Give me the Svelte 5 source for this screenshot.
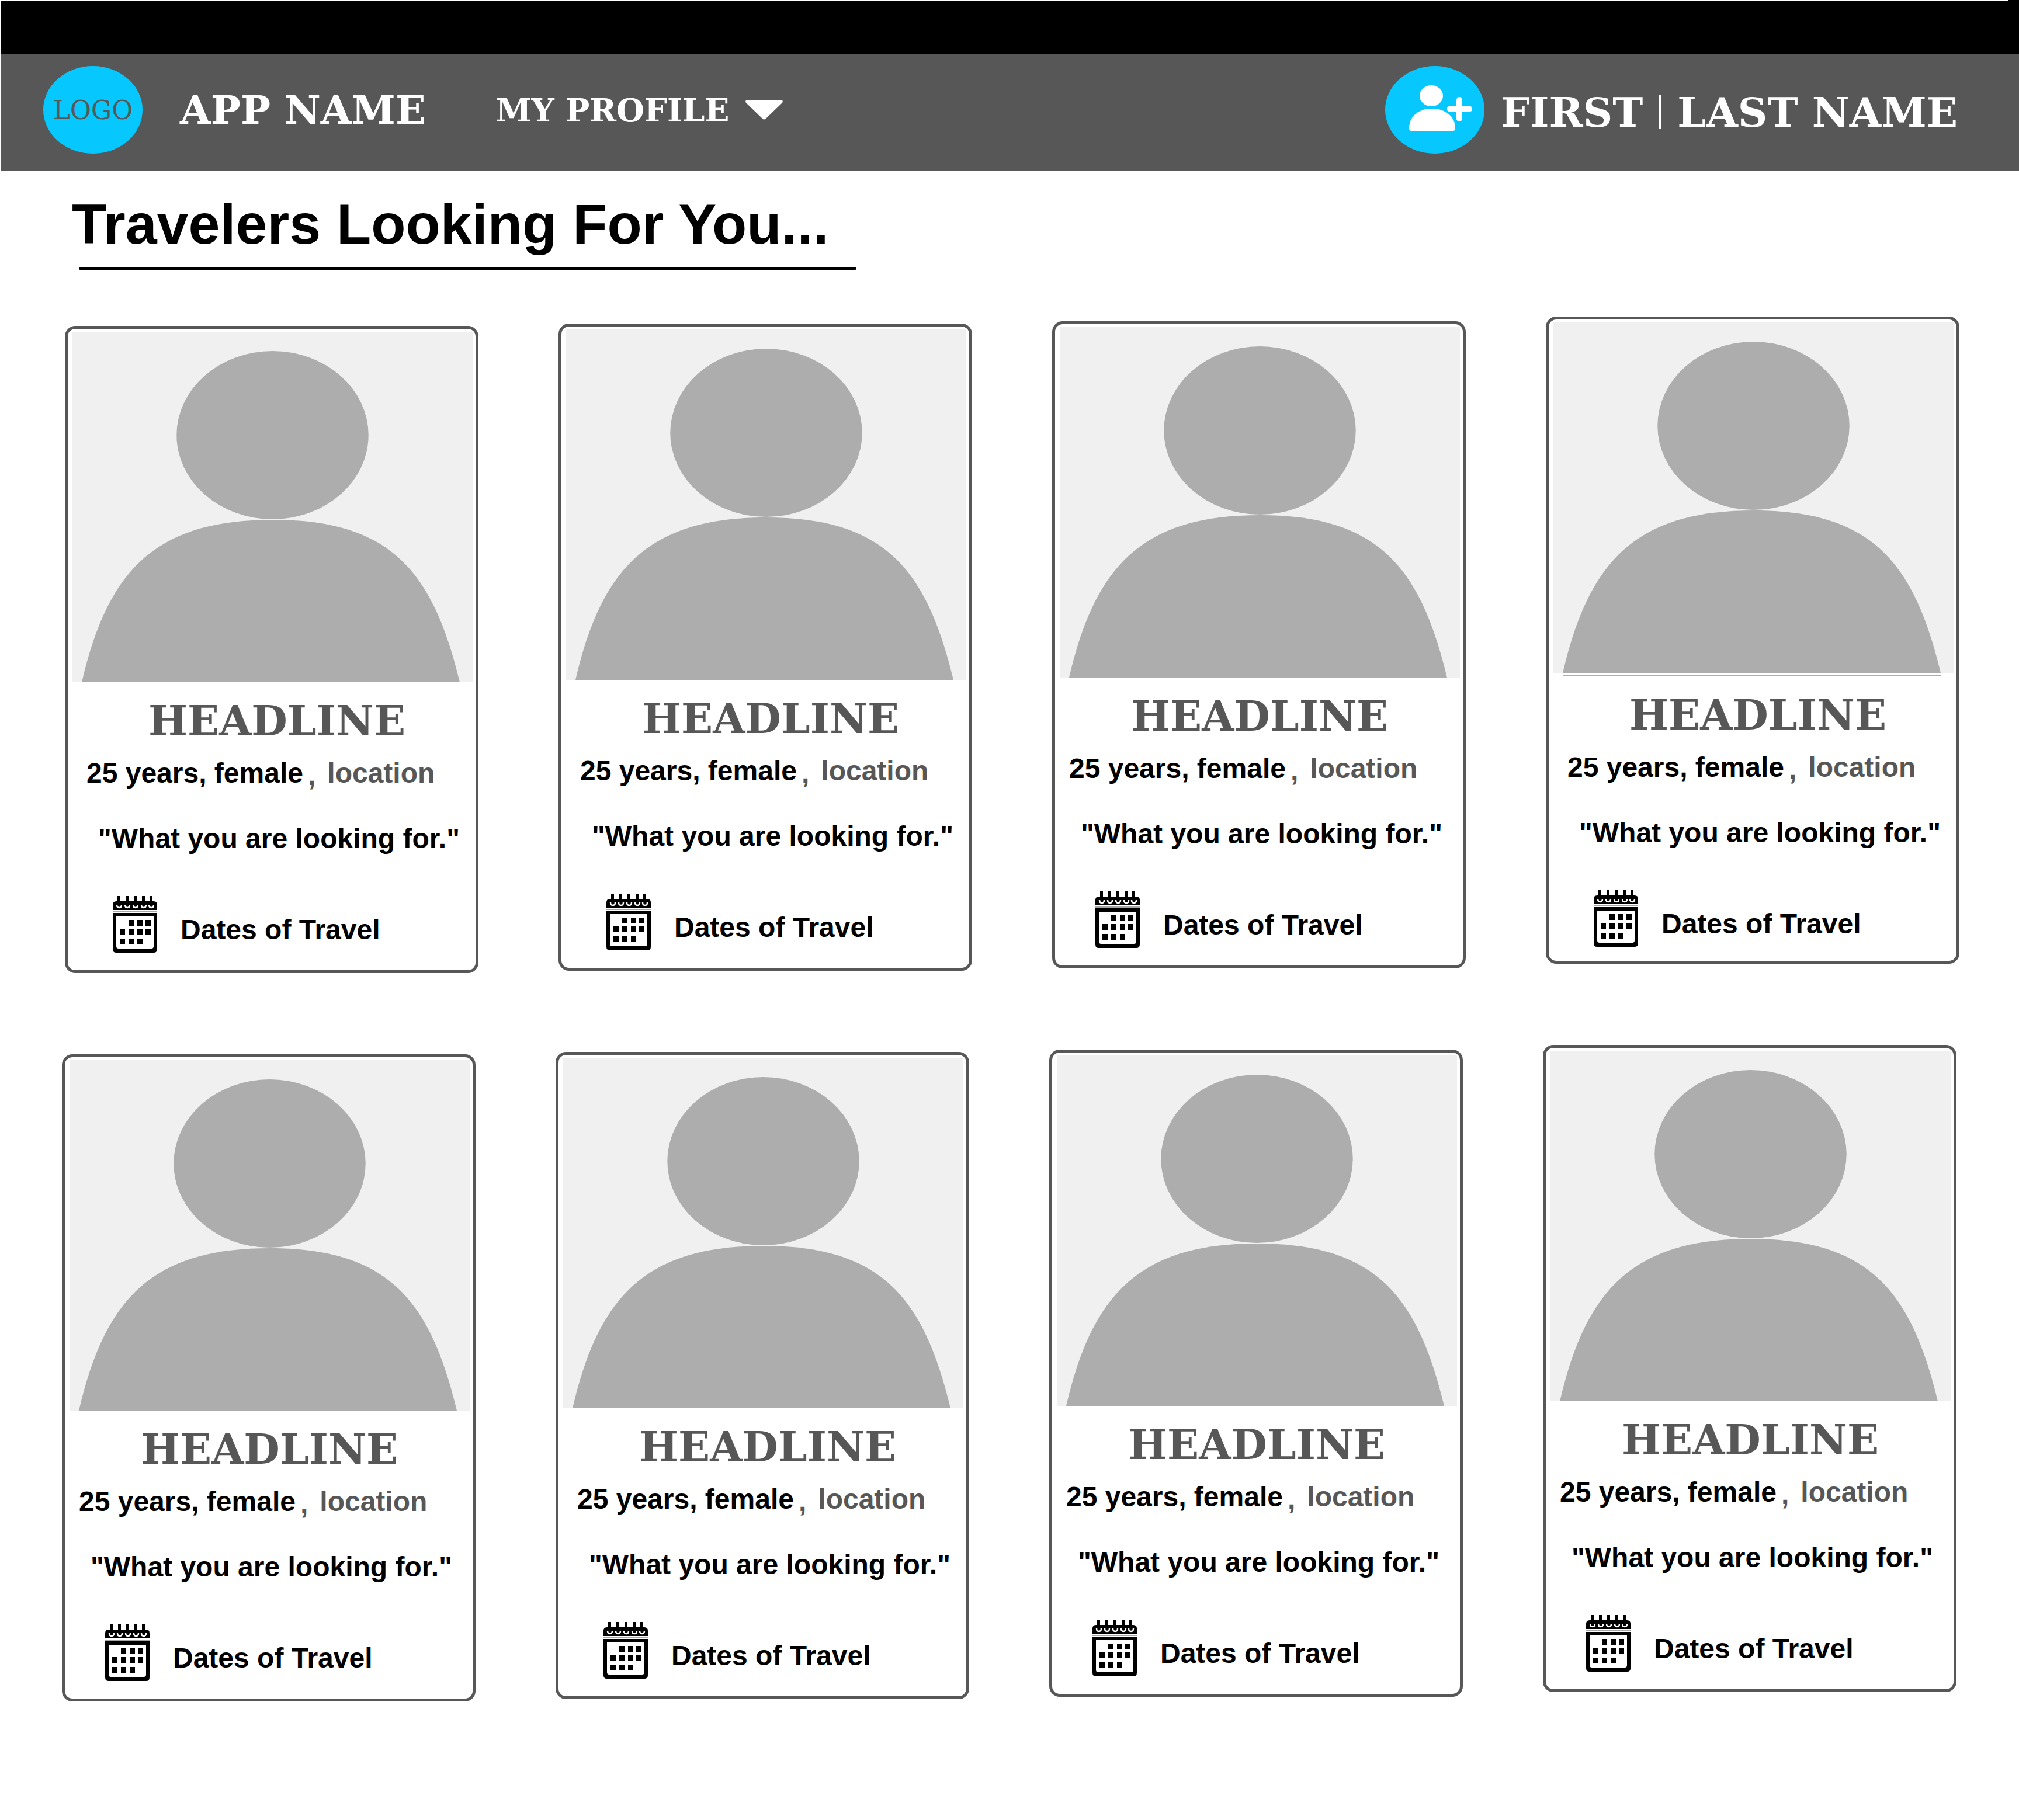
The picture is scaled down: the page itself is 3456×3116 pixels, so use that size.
<script>
  const rows = [
    [
      { id: 1 },
      { id: 2 },
      { id: 3, tight: true },
      { id: 4, strip: true }
    ],
    [
      { id: 5, tight: true },
      { id: 6 },
      { id: 7, tight: true },
      { id: 8, tight: true }
    ]
  ];
  const rings = [11, 25, 39, 53, 66];
  const days = [
    [27, 41], [42, 41], [56, 41],
    [12, 56], [27, 56], [42, 56], [56, 56],
    [12, 73], [27, 73], [42, 73]
  ];
</script>

<div class="top">
  <header class="frame">
    <div class="status"></div>
    <div class="bar">
      <div class="brand">
        <a class="logo" href="#home">LOGO</a>
        <a class="app" href="#home">APP NAME</a>
        <button class="menu" type="button">
          MY PROFILE
          <svg class="caret" viewBox="0 0 64 34" aria-hidden="true"><path d="M2 0H62Q65 2 63 5L35 32Q32 35 29 32L1 5Q-1 2 2 0Z" fill="#fff" /></svg>
        </button>
      </div>
      <a class="user" href="#account">
        <svg class="badge" viewBox="0 0 170 150" aria-hidden="true">
          <ellipse cx="85" cy="75" rx="85" ry="75" fill="#06c8ff" />
          <g fill="#fff">
            <ellipse cx="79" cy="51" rx="20" ry="18" />
            <path d="M41 107C41 86 57 73 80 73S120 86 120 107Q120 111 116 111H45Q41 111 41 107Z" />
            <rect x="106" y="69" width="43" height="9" rx="4" />
            <rect x="122" y="53" width="10" height="42" rx="5" />
          </g>
        </svg>
        <span>FIRST<i class="divider"></i>LAST NAME</span>
      </a>
    </div>
  </header>
  <div class="edge"></div>
</div>

<main>
  <h1>Travelers Looking For You...</h1>

  {#each rows as row, r}
    <section class="row" class:second={r === 1}>
      {#each row as card (card.id)}
        <article class="card">
          <svg class="photo" viewBox="0 0 684 600" preserveAspectRatio="none" aria-hidden="true">
            <rect width="684" height="600" fill="#f0f0f0" />
            <ellipse cx="342" cy="177" rx="164" ry="144" fill="#adadad" />
            <path d="M16 600C60 410 140 322 342 322S616 410 662 600Z" fill="#adadad" />
          </svg>
          {#if card.strip}
            <div class="strip"></div>
          {/if}
          <div class="body" class:tight={card.tight}>
            <h2>HEADLINE</h2>
            <p class="facts">
              <span>25 years, female</span><span class="comma">,</span><span class="place">location</span>
            </p>
            <p class="quote">"What you are looking for."</p>
            <div class="dates">
              <svg class="calendar" viewBox="0 0 76 97" aria-hidden="true">
                <path d="M0 24V15Q0 9 6 9H70Q76 9 76 15V24Z" />
                {#each rings as x}
                  <rect x={x - 3} y="0" width="5" height="16" />
                  <path d="M{x - 4} 15Q{x - 4} 20 {x} 20T{x + 4} 15" fill="none" stroke="#fff" stroke-width="2.5" />
                {/each}
                <path d="M0 27H76" stroke="#888" stroke-width="1.5" />
                <path fill-rule="evenodd" d="M0 29H76V91Q76 97 70 97H6Q0 97 0 91ZM6 35V86Q6 90 10 90H66Q70 90 70 86V35Z" />
                {#each days as [x, y]}
                  <rect {x} {y} width="9" height="10" />
                {/each}
              </svg>
              <span>Dates of Travel</span>
            </div>
          </div>
        </article>
      {/each}
    </section>
  {/each}
</main>

<style>
  :global(body) {
    background: #fff;
    font-family: "Liberation Sans", Arial, sans-serif;
    color: #000;
  }
  .top {
    display: flex;
  }
  .frame {
    flex: 1;
    border: solid #fff;
    border-width: 1px 1px 0 1px;
  }
  .edge {
    width: 18px;
    background: linear-gradient(#000 92px, #575757 92px);
  }
  .status {
    height: 91px;
    background: #000;
  }
  .bar {
    display: flex;
    justify-content: space-between;
    align-items: center;
    height: 200px;
    box-sizing: border-box;
    padding: 0 86px 8px 73px;
    background: #575757;
    font-family: "DejaVu Serif", serif;
    font-weight: 700;
    color: #fff;
    white-space: nowrap;
  }
  .bar a {
    color: inherit;
    text-decoration: none;
  }
  .brand {
    display: flex;
    align-items: center;
  }
  .bar .logo {
    display: flex;
    align-items: center;
    justify-content: center;
    width: 170px;
    height: 150px;
    border-radius: 50%;
    background: #06c8ff;
    color: #575757;
    font-size: 44px;
    font-weight: 400;
  }
  .app {
    margin-left: 64px;
    font-size: 68px;
  }
  .menu {
    display: flex;
    align-items: center;
    gap: 28px;
    margin-left: 120px;
    padding: 0;
    border: 0;
    background: none;
    color: inherit;
    font: inherit;
    font-size: 55px;
  }
  .caret {
    width: 64px;
    height: 34px;
  }
  .user {
    display: flex;
    align-items: center;
    gap: 28px;
    font-size: 70px;
  }
  .user span {
    display: flex;
    align-items: center;
    padding-top: 8px;
  }
  .badge {
    width: 170px;
    height: 150px;
  }
  .divider {
    width: 3px;
    height: 58px;
    margin: 0 28px;
    background: #fff;
  }
  h1 {
    position: relative;
    width: fit-content;
    margin: 0 0 0 135px;
    padding: 34px 48px 15px 0;
    border-bottom: 5px solid #000;
    border-radius: 2px;
    font-size: 97px;
    line-height: 116px;
    text-indent: -12px;
    white-space: nowrap;
  }
  h1::after {
    content: "";
    position: absolute;
    top: 62px;
    left: -12px;
    right: 0;
    height: 1px;
    background: #fff;
  }
  .row {
    display: grid;
    grid-template-columns: repeat(4, 1fr);
    align-items: start;
    gap: 137px;
    padding: 80px 102px 0 111px;
  }
  .row.second {
    padding: 123px 107px 0 106px;
  }
  .card {
    box-sizing: border-box;
    min-height: 1108px;
    padding: 5px 5px 0 8px;
    border: 5px solid #575757;
    border-radius: 18px;
  }
  .card:nth-child(1) {
    margin-top: 16px;
  }
  .card:nth-child(2) {
    margin-top: 12px;
  }
  .card:nth-child(3) {
    margin-top: 8px;
  }
  .photo {
    display: block;
    width: 100%;
    height: 600px;
  }
  .strip {
    height: 2px;
    margin: 4px 22px 0 16px;
    background: #adadad;
  }
  .body {
    padding: 26px 0 0 24px;
    white-space: nowrap;
  }
  .body.tight {
    padding-left: 16px;
  }
  h2 {
    margin: 0 0 20px 106px;
    color: #575757;
    font: 700 71px/80px "DejaVu Serif", serif;
  }
  p {
    margin: 0;
  }
  .facts,
  .quote,
  .dates {
    font-size: 48px;
    font-weight: 700;
    line-height: 60px;
  }
  .facts {
    display: flex;
  }
  .comma {
    padding: 0 20px 0 8px;
    line-height: 68px;
    height: 60px;
    color: #575757;
  }
  .place {
    color: #575757;
  }
  .quote {
    margin: 52px 0 0 20px;
  }
  .dates {
    display: flex;
    align-items: flex-end;
    gap: 40px;
    margin: 68px 0 0 45px;
  }
  .dates span {
    line-height: 78px;
  }
  .calendar {
    width: 76px;
    height: 97px;
  }
</style>
